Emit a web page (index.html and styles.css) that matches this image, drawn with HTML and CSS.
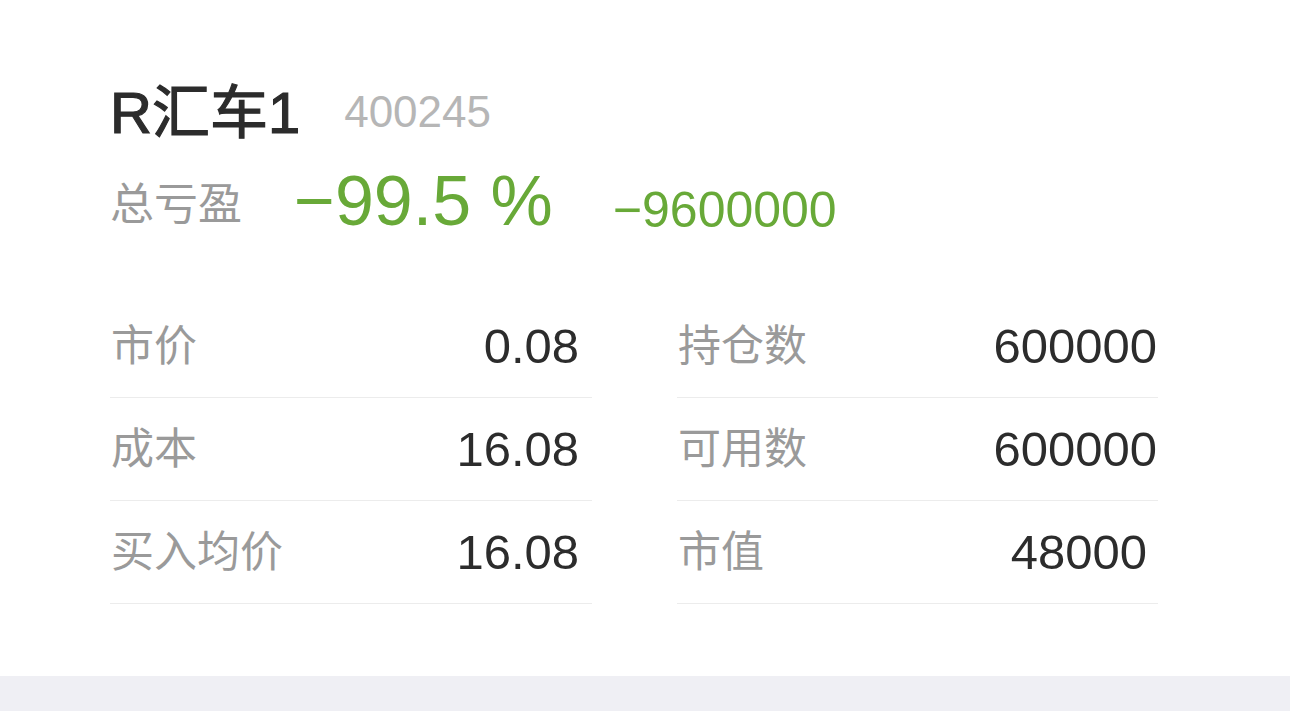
FILE: index.html
```html
<!DOCTYPE html>
<html lang="zh-CN">
<head>
<meta charset="utf-8">
<title>持仓详情</title>
<link rel="stylesheet" href="styles.css">
</head>
<body>
<div class="card">
  <div class="title-row">
    <span class="name">R汇车1</span>
    <span class="code">400245</span>
  </div>
  <div class="pl-row">
    <span class="pl-label">总亏盈</span>
    <span class="pl-pct">−99.5 %</span>
    <span class="pl-amount">−9600000</span>
  </div>
  <div class="grid">
    <div class="col col-left">
      <div class="row"><span class="label">市价</span><span class="value">0.08</span></div>
      <div class="row"><span class="label">成本</span><span class="value">16.08</span></div>
      <div class="row"><span class="label">买入均价</span><span class="value">16.08</span></div>
    </div>
    <div class="col col-right">
      <div class="row"><span class="label">持仓数</span><span class="value">600000</span></div>
      <div class="row"><span class="label">可用数</span><span class="value">600000</span></div>
      <div class="row"><span class="label">市值</span><span class="value value-inset">48000</span></div>
    </div>
  </div>
</div>
<div class="footer-bar"></div>
</body>
</html>
```

FILE: styles.css
```css
* { box-sizing: border-box; }
html, body {
  margin: 0;
  padding: 0;
  background: #ffffff;
  height: 100%;
}
body {
  font-family: "Liberation Sans", "Noto Sans CJK SC", sans-serif;
  display: flex;
  flex-direction: column;
  overflow: hidden;
}
.card {
  padding: 84px 132px 0 110px;
  height: 676px;
  flex: none;
}
.title-row {
  display: flex;
  align-items: center;
  gap: 44px;
  height: 58px;
}
.name {
  font-size: 58px;
  line-height: 58px;
  font-weight: 400;
  -webkit-text-stroke: 1.2px #2c2c2c;
  color: #2c2c2c;
}
.code {
  font-size: 44px;
  line-height: 44px;
  color: #b6b6b6;
  margin-bottom: 2px;
}
.pl-row {
  display: flex;
  align-items: baseline;
  margin-top: 24px;
  height: 70px;
}
.pl-label {
  font-size: 44px;
  line-height: 44px;
  color: #9a9a9a;
  margin-right: 52px;
  position: relative;
  top: -5px;
}
.pl-pct {
  font-size: 70px;
  line-height: 70px;
  color: #68a938;
  margin-right: 60px;
}
.pl-amount {
  font-size: 50px;
  line-height: 50px;
  color: #68a938;
  position: relative;
  top: 2px;
}
.grid {
  margin-top: 59px;
  display: grid;
  grid-template-columns: 482px 481px;
  column-gap: 85px;
}
.row {
  height: 103px;
  display: flex;
  align-items: center;
  justify-content: space-between;
  border-bottom: 1px solid #ececec;
}
.label {
  font-size: 43px;
  line-height: 43px;
  color: #9a9a9a;
  padding-left: 1px;
}
.value {
  font-size: 49px;
  line-height: 49px;
  color: #2c2c2c;
}
.col-left .value { padding-right: 13px; }
.col-right .value { padding-right: 1px; }
.col-right .value-inset { padding-right: 11px; }
.footer-bar {
  flex: 1;
  background: #efeff4;
}
```
